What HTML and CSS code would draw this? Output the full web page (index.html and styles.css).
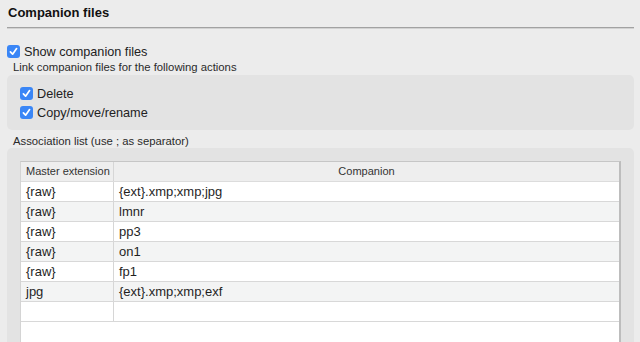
FILE: index.html
```html
<!DOCTYPE html>
<html>
<head>
<meta charset="utf-8">
<link rel="stylesheet" href="styles.css">
</head>
<body>
<div class="pane">
  <h1 class="title">Companion files</h1>
  <label class="check main">
    <span class="box"><svg viewBox="0 0 13 13" width="13" height="13"><path d="M3.4 6.9 L5.6 9.2 L9.6 3.6" fill="none" stroke="#fff" stroke-width="1.7" stroke-linecap="round" stroke-linejoin="round"/></svg></span>
    <span>Show companion files</span>
  </label>
  <div class="label">Link companion files for the following actions</div>
  <div class="group actions">
    <label class="check">
      <span class="box"><svg viewBox="0 0 13 13" width="13" height="13"><path d="M3.4 6.9 L5.6 9.2 L9.6 3.6" fill="none" stroke="#fff" stroke-width="1.7" stroke-linecap="round" stroke-linejoin="round"/></svg></span>
      <span>Delete</span>
    </label>
    <label class="check">
      <span class="box"><svg viewBox="0 0 13 13" width="13" height="13"><path d="M3.4 6.9 L5.6 9.2 L9.6 3.6" fill="none" stroke="#fff" stroke-width="1.7" stroke-linecap="round" stroke-linejoin="round"/></svg></span>
      <span>Copy/move/rename</span>
    </label>
  </div>
  <div class="label assoc">Association list (use ; as separator)</div>
  <div class="group list">
    <div class="table">
      <div class="row head">
        <div class="cell c1">Master extension</div>
        <div class="cell c2 center">Companion</div>
      </div>
      <div class="row"><div class="cell c1">{raw}</div><div class="cell c2">{ext}.xmp;xmp;jpg</div></div>
      <div class="row alt"><div class="cell c1">{raw}</div><div class="cell c2">lmnr</div></div>
      <div class="row"><div class="cell c1">{raw}</div><div class="cell c2">pp3</div></div>
      <div class="row alt"><div class="cell c1">{raw}</div><div class="cell c2">on1</div></div>
      <div class="row"><div class="cell c1">{raw}</div><div class="cell c2">fp1</div></div>
      <div class="row alt"><div class="cell c1">jpg</div><div class="cell c2">{ext}.xmp;xmp;exf</div></div>
      <div class="row"><div class="cell c1"></div><div class="cell c2"></div></div>
    </div>
  </div>
</div>
</body>
</html>
```
FILE: styles.css
```css
html, body {
  margin: 0;
  padding: 0;
  background: #ececec;
  overflow: hidden;
  height: 342px;
}
body {
  font-family: "Liberation Sans", Arial, sans-serif;
  color: #1f1f1f;
}
.pane {
  padding: 0 6px 0 7px;
}
.title {
  margin: 0;
  font-size: 13px;
  font-weight: bold;
  line-height: 16px;
  padding: 5px 0 6px 1px;
  color: #111;
  border-bottom: 1px solid #a2a2a2;
  box-shadow: 0 1px 0 #d2d2d2;
}
.check {
  display: flex;
  align-items: center;
  gap: 4px;
  height: 13px;
  font-size: 12.7px;
  color: #222;
}
.check.main {
  margin-top: 17px;
}
.box {
  width: 13px;
  height: 13px;
  border-radius: 3px;
  background: #3a86f6;
  display: flex;
  flex: none;
}
.label {
  font-size: 11.3px;
  line-height: 13px;
  padding-left: 6px;
  margin-top: 3px;
  color: #2a2a2a;
}
.group {
  background: #e3e3e3;
  border-radius: 5px;
}
.actions {
  margin-top: 1px;
  padding: 12px 13px 11px;
  display: flex;
  flex-direction: column;
  gap: 6px;
}
.label.assoc {
  margin-top: 5px;
}
.list {
  padding: 13px 13px 0;
  height: 181px;
  border-radius: 5px 5px 0 0;
}
.table {
  background: #fff;
  border-top: 1px solid #c6c6c6;
  border-left: 1px solid #d4d4d4;
  border-right: 2px solid #bdbdbd;
  height: 180px;
}
.row {
  display: grid;
  grid-template-columns: 93px 1fr;
  height: 19px;
  border-bottom: 1px solid #d8d8d8;
  font-size: 13px;
  line-height: 19px;
}
.row.alt {
  background: #f3f4f4;
}
.row.head {
  background: #eeeeee;
  font-size: 11px;
  color: #333;
  border-bottom: 1px solid #dcdcdc;
}
.cell {
  padding-left: 5px;
  white-space: nowrap;
  overflow: hidden;
}
.c1 {
  border-right: 1px solid #d6d6d6;
}
.c2 {
  padding-left: 5px;
}
.center {
  text-align: center;
  padding-left: 0;
}
```
